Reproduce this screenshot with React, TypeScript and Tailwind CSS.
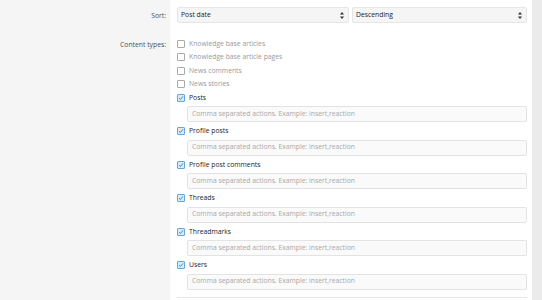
import type { ReactNode } from 'react';

const types: { label: string; checked: boolean }[] = [
  { label: 'Knowledge base articles', checked: false },
  { label: 'Knowledge base article pages', checked: false },
  { label: 'News comments', checked: false },
  { label: 'News stories', checked: false },
  { label: 'Posts', checked: true },
  { label: 'Profile posts', checked: true },
  { label: 'Profile post comments', checked: true },
  { label: 'Threads', checked: true },
  { label: 'Threadmarks', checked: true },
  { label: 'Users', checked: true },
];

export default function App() {
  return (
    <div
      className="w-[542px] h-[300px] overflow-hidden bg-[#ebebeb] text-[6.8px] text-[#141414]"
      style={{ fontFamily: '"Open Sans", "Noto Sans", sans-serif' }}
    >
      <div className="w-[532px] bg-white">
        <Row label="Sort:" labelClass="pt-[11px] pb-[7px]" bodyClass="pt-[7px] pb-[7px]">
          <div className="flex gap-[3px]">
            <Select value="Post date" className="w-[172px]" />
            <Select value="Descending" className="flex-1" />
          </div>
        </Row>

        <Row label="Content types:" labelClass="pt-[10px] pb-[4px]" bodyClass="pt-[7px] pb-[4px]">
          <div className="border-b border-[#e6e6e6] pb-[5px]">
            {types.map((t) => (
              <div key={t.label}>
                <label className="flex items-center gap-[4px] h-[13.5px]">
                  <Checkbox checked={t.checked} />
                  <span className={t.checked ? 'text-[#1d1d1d]' : 'text-[#9a9a9a]'}>{t.label}</span>
                </label>
                {t.checked && (
                  <div className="ml-[10px] mt-[1.5px] mb-[2.5px] h-[16px] rounded-[2px] border border-[#e3e3e3] bg-[#fafafa] px-[4px] flex items-center text-[#a8a8a8]">
                    Comma separated actions. Example: insert,reaction
                  </div>
                )}
              </div>
            ))}
          </div>
        </Row>
      </div>
    </div>
  );
}

function Row({
  label,
  children,
  labelClass = '',
  bodyClass = '',
}: {
  label: string;
  children: ReactNode;
  labelClass?: string;
  bodyClass?: string;
}) {
  return (
    <div className="flex">
      <div className={'w-[170px] shrink-0 bg-[#f5f5f5] text-right pr-[4px] text-[#505050] ' + labelClass}>
        {label}
      </div>
      <div className={'flex-1 pl-[7px] pr-[5px] ' + bodyClass}>{children}</div>
    </div>
  );
}

function Select({ value, className = '' }: { value: string; className?: string }) {
  return (
    <div
      className={
        'h-[16px] rounded-[2px] border border-[#e6e6e6] bg-[#f5f5f5] pl-[3px] pr-[4px] flex items-center justify-between text-[#1d1d1d] ' +
        className
      }
    >
      <span>{value}</span>
      <svg width="4" height="7" viewBox="0 0 4 7" className="shrink-0">
        <path d="M2 0 L4 2.6 L0 2.6 Z" fill="#333" />
        <path d="M2 7 L4 4.4 L0 4.4 Z" fill="#333" />
      </svg>
    </div>
  );
}

function Checkbox({ checked }: { checked: boolean }) {
  if (!checked) {
    return <span className="w-[8px] h-[8px] shrink-0 border border-[#a9a9a9] bg-white rounded-[1px]" />;
  }
  return (
    <span className="w-[8px] h-[8px] shrink-0 border border-[#62a8dc] bg-[#d9eaf8] rounded-[1px] flex items-center justify-center">
      <svg width="6" height="6" viewBox="0 0 6 6">
        <path d="M1 3.2 L2.4 4.5 L5 1.4" stroke="#2f7fc0" strokeWidth="0.9" fill="none" />
      </svg>
    </span>
  );
}
